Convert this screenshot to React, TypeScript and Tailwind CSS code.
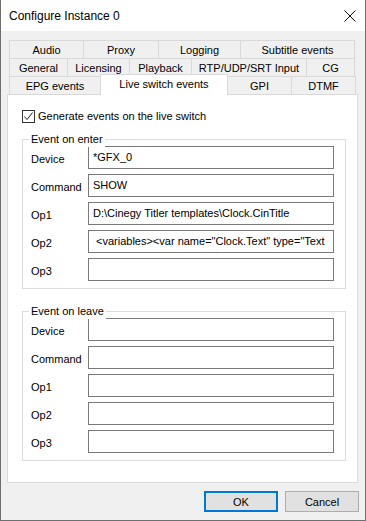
import React from "react";

type Tab = { label: string; w: number; selected?: boolean };

const rows: Tab[][] = [
  [
    { label: "Audio", w: 75 },
    { label: "Proxy", w: 76 },
    { label: "Logging", w: 83 },
    { label: "Subtitle events", w: 115 },
  ],
  [
    { label: "General", w: 59 },
    { label: "Licensing", w: 63 },
    { label: "Playback", w: 63 },
    { label: "RTP/UDP/SRT Input", w: 116 },
    { label: "CG", w: 49 },
  ],
  [
    { label: "EPG events", w: 92 },
    { label: "Live switch events", w: 128, selected: true },
    { label: "GPI", w: 65 },
    { label: "DTMF", w: 65 },
  ],
];

const TabRow = ({ tabs }: { tabs: Tab[] }) => (
  <div className="flex h-[18px] items-start">
    {tabs.map((t, i) =>
      t.selected ? (
        <div
          key={t.label}
          style={{ width: t.w }}
          className="relative z-10 -ml-px -mt-[2px] flex h-[21px] items-start justify-center border-x border-t border-[#d9d9d9] bg-white pt-[1px]"
        >
          {t.label}
        </div>
      ) : (
        <div
          key={t.label}
          style={{ width: t.w }}
          className={`flex h-[18px] items-center justify-center border-x border-t border-[#d9d9d9] bg-[#f0f0f0] ${i > 0 ? "-ml-px" : ""}`}
        >
          {t.label}
        </div>
      )
    )}
  </div>
);

const Field = ({ label, value, indent }: { label: string; value?: string; indent?: boolean }) => (
  <div className="flex h-[23px] items-center">
    <div className="w-[64px] pl-[7px] pt-[2px]">{label}</div>
    <div
      className={`flex h-[23px] w-[246px] items-center overflow-hidden whitespace-nowrap border border-[#7a7a7a] bg-white pb-[2px] ${indent ? "pl-[7px]" : "pl-[4px]"}`}
    >
      {value}
    </div>
  </div>
);

const Group = ({ title, values }: { title: string; values: string[] }) => (
  <div className="relative w-[324px] border border-[#dcdcdc] px-px pb-[7px] pt-[6px]">
    <span className="absolute left-[6px] top-[-9px] bg-white px-[2px]">{title}</span>
    <div className="flex flex-col gap-[5px]">
      {["Device", "Command", "Op1", "Op2", "Op3"].map((l, i) => (
        <Field key={l} label={l} value={values[i]} indent={l === "Op2" && !!values[i]} />
      ))}
    </div>
  </div>
);

export default function App() {
  return (
    <div
      className="flex h-[521px] w-[366px] flex-col border-x border-b border-[#6f6f6f] bg-[#f0f0f0] text-[11px] leading-[16px] text-black"
      style={{ fontFamily: '"Liberation Sans", Arial, sans-serif' }}
    >
      {/* title bar */}
      <div className="flex h-[31px] items-center justify-between bg-white pl-[8px] pr-[8px]">
        <span className="text-[12px]">Configure Instance 0</span>
        <svg width="12" height="12" viewBox="0 0 12 12" className="mr-[1px]">
          <path d="M0.5 0.5 L11.5 11.5 M11.5 0.5 L0.5 11.5" stroke="#111" strokeWidth="1" fill="none" />
        </svg>
      </div>

      <div className="flex flex-1 flex-col pl-[6px] pt-[9px]">
        <div className="ml-[2px]">
          {rows.map((r, i) => (
            <TabRow key={i} tabs={r} />
          ))}
        </div>

        {/* tab page */}
        <div className="h-[389px] w-[351px] border border-[#d9d9d9] bg-white pl-[14px] pt-[13px]">
          <label className="flex items-center gap-[3px]">
            <span className="flex h-[13px] w-[13px] items-center justify-center border border-[#333] bg-white">
              <svg width="11" height="11" viewBox="0 0 11 11">
                <path d="M1.5 5.5 L4 8.5 L9.5 1.5" stroke="#222" strokeWidth="1" fill="none" />
              </svg>
            </span>
            <span>Generate events on the live switch</span>
          </label>

          <div className="mt-[15px] flex flex-col gap-[22px]">
            <Group
              title="Event on enter"
              values={[
                "*GFX_0",
                "SHOW",
                "D:\\Cinegy Titler templates\\Clock.CinTitle",
                '<variables><var name="Clock.Text" type="Text',
                "",
              ]}
            />
            <Group title="Event on leave" values={["", "", "", "", ""]} />
          </div>
        </div>

        {/* buttons */}
        <div className="mr-[6px] mt-[8px] flex justify-end gap-[7px]">
          <button className="h-[21px] w-[74px] border-2 border-[#0078d7] bg-[#e1e1e1]">OK</button>
          <button className="h-[21px] w-[74px] border border-[#adadad] bg-[#e1e1e1]">Cancel</button>
        </div>
      </div>
    </div>
  );
}
